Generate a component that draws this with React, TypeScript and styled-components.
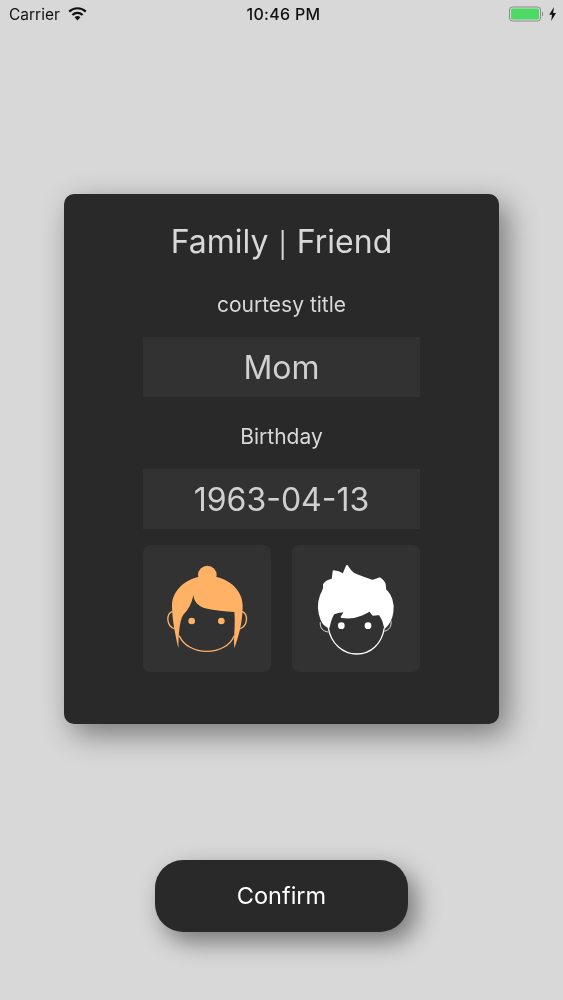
import React from "react";
import styled, { createGlobalStyle } from "styled-components";

const Global = createGlobalStyle`
  html, body { margin: 0; padding: 0; background: #d8d8d8; }
  body { font-family: Inter, "Liberation Sans", sans-serif; }
`;

const Page = styled.div`
  width: 563px;
  height: 1000px;
  overflow: hidden;
  background: #d8d8d8;
  display: flex;
  flex-direction: column;
  align-items: center;
`;

const StatusBar = styled.div`
  width: 100%;
  height: 28px;
  margin-bottom: 2px;
  box-sizing: border-box;
  padding: 0 6px 0 9px;
  display: grid;
  grid-template-columns: 1fr auto 1fr;
  align-items: center;
  color: #111;
  will-change: transform;
`;

const StatusLeft = styled.div`
  display: flex;
  align-items: center;
  gap: 8px;
  font-size: 15.5px;
  font-weight: 400;
`;

const StatusTime = styled.div`
  margin-left: 1px;
  font-size: 16px;
  font-weight: 500;
  letter-spacing: 0.3px;
`;

const StatusRight = styled.div`
  display: flex;
  justify-content: flex-end;
  align-items: center;
`;

const Card = styled.section`
  width: 435px;
  height: 530px;
  margin-top: 164px;
  box-sizing: border-box;
  padding-top: 24px;
  background: #292929;
  border-radius: 10px;
  box-shadow: 8px 10px 30px rgba(0, 0, 0, 0.45);
  display: flex;
  flex-direction: column;
  align-items: center;
  will-change: transform;
`;

const Title = styled.h1`
  margin: 0;
  height: 46px;
  line-height: 48px;
  font-size: 32px;
  font-weight: 400;
  color: #d8d8d8;
`;

const Bar = styled.span`
  font-size: 25px;
  margin: 0 1px;
  vertical-align: -1px;
  font-weight: 400;
`;

const Label = styled.div<{ $top: number }>`
  margin-top: ${(p) => p.$top}px;
  height: 30px;
  line-height: 30px;
  font-size: 21px;
  color: #d8d8d8;
`;

const Field = styled.div<{ $top: number }>`
  margin-top: ${(p) => p.$top}px;
  width: 277px;
  height: 60px;
  background: #323232;
  color: #d0d0d0;
  font-size: 32px;
  display: flex;
  align-items: center;
  justify-content: center;
`;

const Tiles = styled.div`
  margin-top: 16px;
  width: 277px;
  display: grid;
  grid-template-columns: 128px 128px;
  justify-content: space-between;
`;

const Tile = styled.div`
  height: 127px;
  background: #323232;
  border-radius: 8px;
  display: flex;
  align-items: center;
  justify-content: center;
`;

const Confirm = styled.button`
  margin-top: 136px;
  width: 253px;
  height: 72px;
  border: none;
  border-radius: 28px;
  padding: 0 0 2px;
  background: #292929;
  color: #fff;
  font-family: inherit;
  font-size: 23.5px;
  font-weight: 400;
  box-shadow: 8px 10px 25px rgba(0, 0, 0, 0.45);
  will-change: transform;
`;

const Wifi = () => (
  <svg width="19" height="14" viewBox="0 0 19 14">
    <path d="M9.5 13.5 L6.6 10.3 A4.3 4.3 0 0 1 12.4 10.3 Z" fill="#111" />
    <path d="M4.4 8 A7.4 7.4 0 0 1 14.6 8" fill="none" stroke="#111" strokeWidth="2.2" />
    <path d="M1.2 4.6 A12 12 0 0 1 17.8 4.6" fill="none" stroke="#111" strokeWidth="2.2" />
  </svg>
);

const Battery = () => (
  <svg width="48" height="16" viewBox="0 0 48 16">
    <rect x="0.5" y="1" width="31" height="14" rx="3" fill="none" stroke="#8a8a8a" />
    <rect x="2" y="2.5" width="28" height="11" rx="1.5" fill="#4cd964" />
    <rect x="33" y="6" width="1" height="4" fill="#8a8a8a" />
    <path d="M45 1 L40.2 8.8 H43 L42.2 15 L47 6.9 H44.1 Z" fill="#111" />
  </svg>
);

const Female = () => (
  <svg width="100" height="100" viewBox="51 55 300 300">
    <g fill="none" stroke="#ffb266" strokeWidth="4">
      <path d="M118 285 C130 315 165 332 200 332 C238 332 270 315 283 285" />
      <path d="M97 212 C78 220 78 255 104 265" />
      <path d="M306 212 C325 220 325 255 299 265" />
    </g>
    <circle cx="202" cy="103" r="28" fill="#ffb266" />
    <path
      fill="#ffb266"
      d="M115 323 C108 290 96 240 96 195 C96 145 145 106 202 106 C260 106 308 145 308 195 C308 245 295 290 283 323 C280 290 287 250 283 214 C255 212 225 210 195 203 C172 195 162 182 160 163 C155 190 145 207 130 222 C118 240 116 280 115 323 Z"
    />
    <circle cx="155" cy="241" r="10" fill="#ffb266" />
    <circle cx="244" cy="241" r="10" fill="#ffb266" />
  </svg>
);

const Male = () => (
  <svg width="100" height="100" viewBox="63 55 300 300">
    <g fill="none" stroke="#fff" strokeWidth="4">
      <path d="M130 262 C138 310 175 340 215 340 C258 340 290 310 298 262" />
      <path d="M106 245 C104 262 114 272 130 274" strokeWidth="2.5" />
      <path d="M318 240 C320 258 312 268 298 272" strokeWidth="2.5" />
    </g>
    <path
      fill="#fff"
      stroke="#fff"
      strokeWidth="6"
      strokeLinejoin="round"
      d="M110 238 C102 218 99 190 107 167 C111 154 121 147 117 132 C123 119 133 121 143 116 L146 92 C156 92 166 96 175 102 L186 76 C192 86 198 94 205 99 C224 108 244 114 262 121 L284 113 C292 118 297 124 299 131 L301 148 C317 162 327 190 322 215 C319 238 308 252 300 260 C298 244 292 232 284 220 L264 222 L254 209 C246 216 238 219 230 222 C212 230 190 232 170 229 C174 222 178 217 181 212 C168 212 156 214 146 218 C139 227 134 245 131 260 C121 255 114 248 110 238 Z"
    />
    <circle cx="169" cy="255" r="10" fill="#fff" />
    <circle cx="249" cy="255" r="10" fill="#fff" />
  </svg>
);

export default function App() {
  return (
    <Page>
      <Global />
      <StatusBar>
        <StatusLeft>
          Carrier
          <Wifi />
        </StatusLeft>
        <StatusTime>10:46 PM</StatusTime>
        <StatusRight>
          <Battery />
        </StatusRight>
      </StatusBar>
      <Card>
        <Title>
          Family <Bar>|</Bar> Friend
        </Title>
        <Label $top={26}>courtesy title</Label>
        <Field $top={17}>Mom</Field>
        <Label $top={25}>Birthday</Label>
        <Field $top={17}>1963-04-13</Field>
        <Tiles>
          <Tile>
            <Female />
          </Tile>
          <Tile>
            <Male />
          </Tile>
        </Tiles>
      </Card>
      <Confirm>Confirm</Confirm>
    </Page>
  );
}
